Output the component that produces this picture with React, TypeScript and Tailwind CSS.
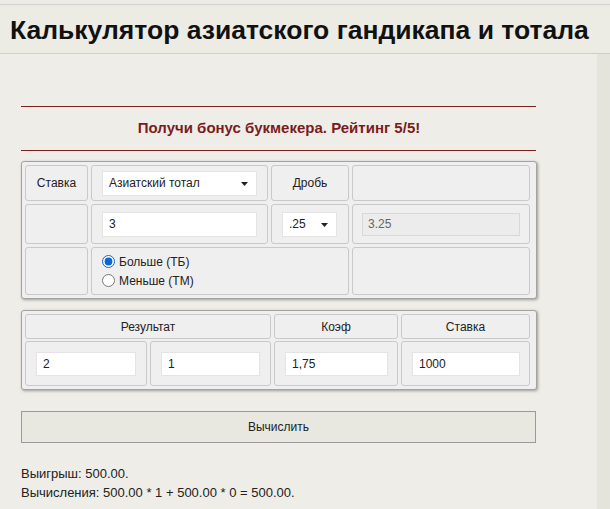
import React from "react";

const cell = "rounded-[3px] border border-[#c9c9c9] bg-[#efefef] flex items-center";
const input = "h-[24px] bg-white border border-[#e4e4e4] px-[6px] text-[12px] text-[#222] outline-none";

function FakeSelect({ value, w }: { value: string; w: string }) {
  return (
    <div className={`relative ${w} h-[25px] bg-white border border-[#e4e4e4] flex items-center px-[6px] text-[12px] text-[#222]`}>
      <span>{value}</span>
      <svg className="absolute right-[8px] top-[10px]" width="7" height="4" viewBox="0 0 7 4">
        <path d="M0 0 L7 0 L3.5 4 Z" fill="#222" />
      </svg>
    </div>
  );
}

export default function App() {
  return (
    <div className="min-h-[509px] bg-[#e9e8e1] text-[#222]" style={{ fontFamily: '"Liberation Sans", Arial, sans-serif' }}>
      <div className="h-[5px] border-b border-[#d2d2cc] bg-[#ecebe5]" />
      <div className="h-[49px] border-b border-[#cfcfc9] bg-[#ecebe4] flex items-center pl-[10px] pt-[2px]">
        <h1 className="text-[26.5px] font-bold text-[#111] leading-none">Калькулятор азиатского гандикапа и тотала</h1>
      </div>
      <div className="flex">
        <div className="w-[597px] bg-[#eeede8] pt-[52px] pb-[20px]">
          <div className="ml-[21px] w-[516px]">
            <div className="border-t border-[#7a1f1f] w-[515px]" />
            <div className="h-[43px] flex items-center justify-center text-[15px] font-bold text-[#7b1c1c]">
              Получи бонус букмекера. Рейтинг 5/5!
            </div>
            <div className="border-t border-[#7a1f1f] w-[515px]" />

            <div className="mt-[10px] border border-[#a3a3a3] rounded-[3px] bg-[#efefef] p-[3px] shadow-[1px_1px_3px_rgba(0,0,0,0.35)]">
              <div className="grid grid-cols-[63px_177px_78px_178px] gap-x-[3px] gap-y-[3px] grid-rows-[36px_40px_48px] text-[12px]">
                <div className={`${cell} justify-center`}>Ставка</div>
                <div className={`${cell} pl-[10px]`}>
                  <FakeSelect value="Азиатский тотал" w="w-[155px]" />
                </div>
                <div className={`${cell} justify-center`}>Дробь</div>
                <div className={cell} />

                <div className={cell} />
                <div className={`${cell} pl-[10px]`}>
                  <input className={`${input} w-[155px] h-[25px]`} defaultValue="3" />
                </div>
                <div className={`${cell} pl-[10px]`}>
                  <FakeSelect value=".25" w="w-[55px]" />
                </div>
                <div className={`${cell} pl-[9px]`}>
                  <input
                    className="h-[23px] w-[158px] bg-[#ececec] border border-[#d8d8d8] px-[5px] text-[12px] text-[#666] outline-none"
                    defaultValue="3.25"
                    disabled
                  />
                </div>

                <div className={cell} />
                <div className={`${cell} col-span-2 flex-col items-start justify-center pl-[10px] gap-[1px]`}>
                  <label className="flex items-center gap-[4px]">
                    <input type="radio" name="t" defaultChecked className="m-0 w-[13px] h-[13px] accent-[#0b67d0]" />
                    <span>Больше (ТБ)</span>
                  </label>
                  <label className="flex items-center gap-[4px]">
                    <input type="radio" name="t" className="m-0 w-[13px] h-[13px]" />
                    <span>Меньше (ТМ)</span>
                  </label>
                </div>
                <div className={cell} />
              </div>
            </div>

            <div className="mt-[11px] border border-[#a3a3a3] rounded-[3px] bg-[#efefef] p-[3px] shadow-[1px_1px_3px_rgba(0,0,0,0.35)]">
              <div className="grid grid-cols-[122px_121px_124px_129px] gap-x-[3px] gap-y-[2px] grid-rows-[25px_45px] text-[12px]">
                <div className={`${cell} col-span-2 justify-center`}>Результат</div>
                <div className={`${cell} justify-center`}>Коэф</div>
                <div className={`${cell} justify-center`}>Ставка</div>

                <div className={`${cell} pl-[10px]`}>
                  <input className={`${input} w-[100px]`} defaultValue="2" />
                </div>
                <div className={`${cell} pl-[10px]`}>
                  <input className={`${input} w-[99px]`} defaultValue="1" />
                </div>
                <div className={`${cell} pl-[10px]`}>
                  <input className={`${input} w-[103px]`} defaultValue="1,75" />
                </div>
                <div className={`${cell} pl-[10px]`}>
                  <input className={`${input} w-[108px]`} defaultValue="1000" />
                </div>
              </div>
            </div>

            <button className="mt-[21px] w-[515px] h-[32px] border border-[#9a9a9a] bg-[#e8e7e0] text-[12px] text-[#222]">
              Вычислить
            </button>

            <div className="mt-[21px] text-[13px] leading-[19px] text-[#222]">
              <div>Выигрыш: 500.00.</div>
              <div>Вычисления: 500.00 * 1 + 500.00 * 0 = 500.00.</div>
            </div>
          </div>
        </div>
        <div className="flex-1 bg-[#e4e3dc]" />
      </div>
    </div>
  );
}
